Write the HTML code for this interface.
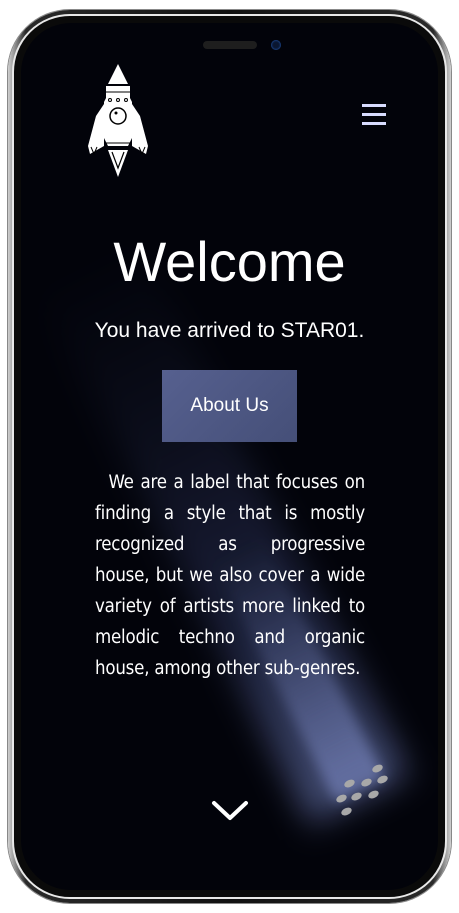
<!DOCTYPE html>
<html><head><meta charset="utf-8"><style>
html,body{margin:0;padding:0;width:459px;height:913px;background:#fff;overflow:hidden;font-family:"Liberation Sans","DejaVu Sans",sans-serif}
.frame{position:absolute;left:8px;top:10px;width:443px;height:893px;border-radius:62px;background:linear-gradient(90deg,#cfcfcf,#2a2a2a 4%,#111 50%,#2a2a2a 96%,#cfcfcf);box-shadow:0 0 0 1px #888}
.frame2{position:absolute;left:12px;top:14px;width:435px;height:885px;border-radius:58px;background:#0a0a0a;border:2px solid #e8e8e8;box-sizing:border-box}
.screen{position:absolute;left:21px;top:23px;width:417px;height:867px;border-radius:50px;background:#02030a;overflow:hidden}
.beam{position:absolute;left:290px;top:180px;width:110px;height:600px;transform:rotate(-27deg);transform-origin:50% 100%;background:linear-gradient(180deg,rgba(60,70,120,0) 0%,rgba(60,70,120,.15) 30%,rgba(80,95,160,.3) 65%,rgba(120,135,200,.55) 100%);filter:blur(16px)}
.beam2{position:absolute;left:315px;top:500px;width:55px;height:270px;transform:rotate(-27deg);transform-origin:50% 100%;background:linear-gradient(180deg,rgba(90,105,170,0),rgba(140,155,220,.5));filter:blur(6px)}
.dot{position:absolute;width:11px;height:7px;border-radius:50%;background:#a8a8a8;transform:rotate(-25deg)}
.notch{position:absolute;left:203px;top:41px;width:54px;height:8px;border-radius:4px;background:#1e1e1e}
.cam{position:absolute;left:271px;top:40px;width:10px;height:10px;border-radius:50%;background:#0a1630;box-shadow:inset 0 0 2px #2a6ad0}
.t{position:absolute;left:0;width:459px;text-align:center;color:#fff}
.btn{position:absolute;left:162px;top:370px;width:135px;height:72px;background:linear-gradient(135deg,#56608f,#454f78);color:#fff;font-size:19px;line-height:72px;text-align:center}
.p{position:absolute;left:95px;top:467px;width:270px;color:#fff;font-size:18.5px;line-height:31px;text-align:justify;font-family:"DejaVu Sans Condensed","Liberation Sans Narrow","Liberation Sans",sans-serif;letter-spacing:-.2px}
.hb{position:absolute;left:362px;width:24px;height:3px;background:#d8dcff}
</style></head><body>
<div class="frame"></div>
<div class="frame2"></div>
<div class="screen">
<div class="beam" style="left:284px;top:177px"></div><div class="beam2" style="left:312px;top:497px"></div>
</div>
<div class="dot" style="left:372px;top:765px"></div>
<div class="dot" style="left:344px;top:780px"></div>
<div class="dot" style="left:361px;top:779px"></div>
<div class="dot" style="left:377px;top:776px"></div>
<div class="dot" style="left:336px;top:795px"></div>
<div class="dot" style="left:351px;top:793px"></div>
<div class="dot" style="left:368px;top:791px"></div>
<div class="dot" style="left:341px;top:808px"></div>
<div class="notch"></div><div class="cam"></div>
<svg style="position:absolute;left:86px;top:62px" width="64" height="116" viewBox="0 0 64 116">
<path d="M32 2 L42 22 L22 22 Z" fill="#fff"/>
<path d="M20 24 H44 V36 L46 40 V76 L42 84 H22 L18 76 V40 L20 36 Z" fill="#fff"/>
<path d="M18 42 L10 54 L2 84 L4 92 L18 84 Z" fill="#fff"/>
<path d="M46 42 L54 54 L62 84 L60 92 L46 84 Z" fill="#fff"/>
<path d="M22 88 H42 L32 115 Z" fill="#fff"/>
<circle cx="32" cy="54" r="8" fill="none" stroke="#000" stroke-width="1.5"/>
<circle cx="30" cy="51" r="1.5" fill="#000"/>
<line x1="20" y1="30" x2="44" y2="30" stroke="#000" stroke-width="1"/>
<circle cx="24" cy="38" r="1.5" fill="none" stroke="#000"/><circle cx="32" cy="38" r="1.5" fill="none" stroke="#000"/><circle cx="40" cy="38" r="1.5" fill="none" stroke="#000"/>
<line x1="20" y1="81" x2="44" y2="81" stroke="#000" stroke-width="1"/>
<path d="M26 90 L32 106 L38 90" fill="none" stroke="#000" stroke-width="1.2"/>
<path d="M5 85 L8 92 L11 85" fill="none" stroke="#000"/><path d="M53 85 L56 92 L59 85" fill="none" stroke="#000"/>
</svg>
<div class="hb" style="top:104px"></div><div class="hb" style="top:113px"></div><div class="hb" style="top:122px"></div>
<div class="t" style="top:224px;font-size:56px;line-height:76px">Welcome</div>
<div class="t" style="top:317px;font-size:21px;line-height:28px;left:0">You have arrived to STAR01.</div>
<div class="btn">About Us</div>
<div class="p">&nbsp;&nbsp;We are a label that focuses on finding a style that is mostly recognized as progressive house, but we also cover a wide variety of artists more linked to melodic techno and organic house, among other sub-genres.</div>
<svg style="position:absolute;left:211px;top:799px" width="38" height="24" viewBox="0 0 38 24"><path d="M3 4 L19 19 L35 4" fill="none" stroke="#fff" stroke-width="4" stroke-linecap="round" stroke-linejoin="round"/></svg>
</body></html>
